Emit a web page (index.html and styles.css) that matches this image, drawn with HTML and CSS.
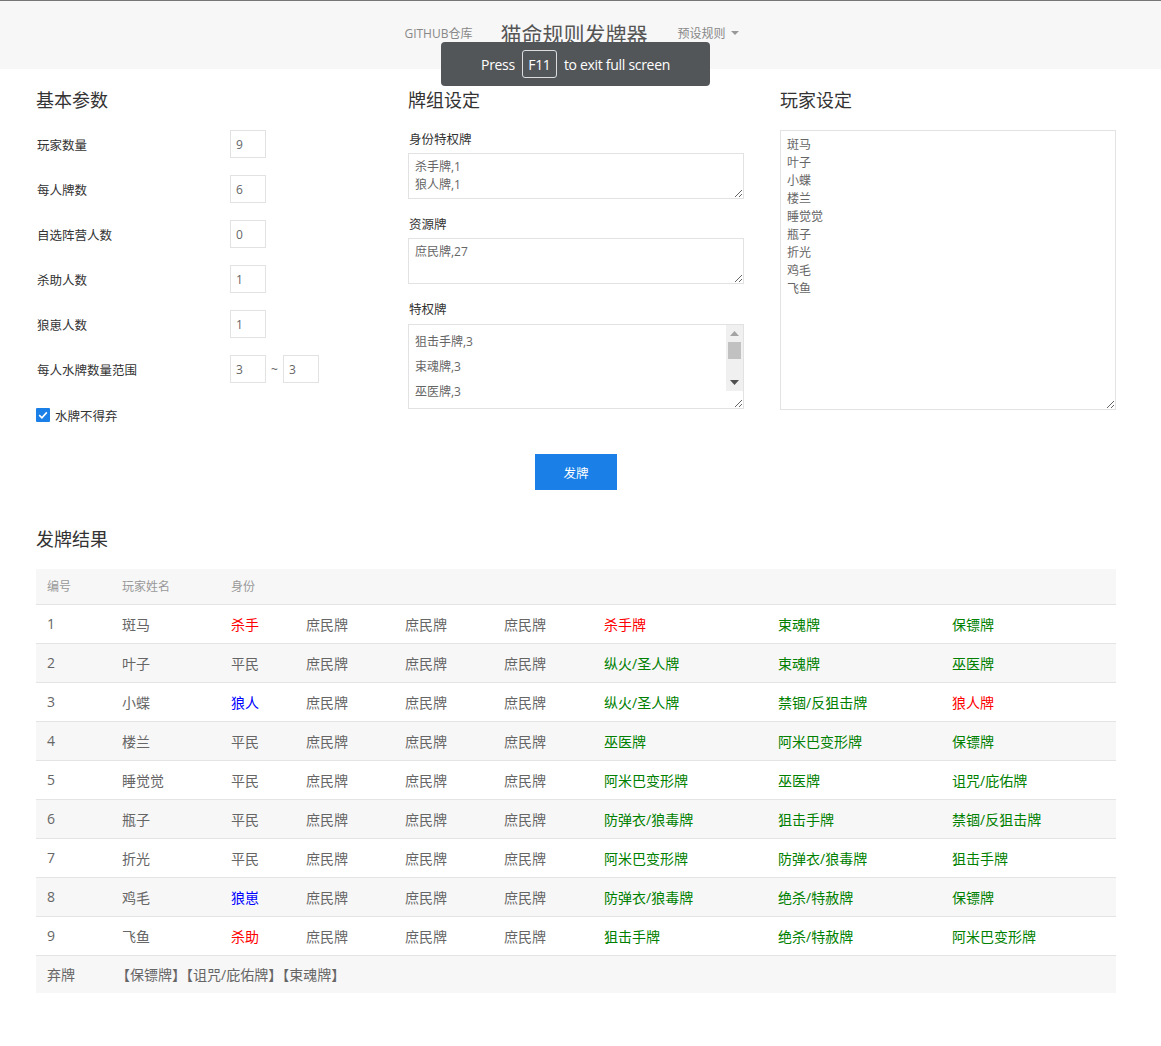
FILE: index.html
```html
<!DOCTYPE html>
<html lang="zh-CN">
<head>
<meta charset="utf-8">
<title>猫命规则发牌器</title>
<link rel="stylesheet" href="styles.css">
</head>
<body>
<header class="topbar">
  <nav class="nav">
    <a class="nav-link">GITHUB仓库</a>
    <span class="brand">猫命规则发牌器</span>
    <a class="nav-link dropdown">预设规则 <span class="caret"></span></a>
  </nav>
</header>

<div class="fs-toast">Press <span class="kbd">F11</span> to exit full screen</div>

<main class="container">
  <section class="settings">
    <div class="col">
      <h2 class="col-title">基本参数</h2>
      <div class="form-row"><label>玩家数量</label><input class="num" value="9"></div>
      <div class="form-row"><label>每人牌数</label><input class="num" value="6"></div>
      <div class="form-row"><label>自选阵营人数</label><input class="num" value="0"></div>
      <div class="form-row"><label>杀助人数</label><input class="num" value="1"></div>
      <div class="form-row"><label>狼崽人数</label><input class="num" value="1"></div>
      <div class="form-row"><label>每人水牌数量范围</label><span class="range"><input class="num" value="3"><span class="tilde">~</span><input class="num" value="3"></span></div>
      <div class="check-row"><span class="checkbox"><svg viewBox="0 0 14 14" width="14" height="14"><path d="M3.2 7.2 L5.9 9.8 L10.8 4.4" fill="none" stroke="#fff" stroke-width="1.6"/></svg></span><span>水牌不得弃</span></div>
    </div>
    <div class="col">
      <h2 class="col-title">牌组设定</h2>
      <div class="field-label first">身份特权牌</div>
      <textarea class="ta ta-s">杀手牌,1
狼人牌,1</textarea>
      <div class="field-label">资源牌</div>
      <textarea class="ta ta-s">庶民牌,27</textarea>
      <div class="field-label">特权牌</div>
      <div class="ta-wrap">
        <textarea class="ta ta-m">狙击手牌,3
束魂牌,3
巫医牌,3
保镖牌,3
纵火/圣人牌,2
阿米巴变形牌,3
防弹衣/狼毒牌,3
绝杀/特赦牌,2
禁锢/反狙击牌,2
诅咒/庇佑牌,1
狼人牌,1
杀手牌,1</textarea>
        <div class="fake-scroll" aria-hidden="true">
          <span class="sb-btn sb-up"><svg width="9" height="5" viewBox="0 0 9 5"><path d="M0 5 L4.5 0 L9 5 Z" fill="#a3a3a3"/></svg></span>
          <span class="sb-track"><span class="sb-thumb"></span></span>
          <span class="sb-btn sb-down"><svg width="9" height="5" viewBox="0 0 9 5"><path d="M0 0 L4.5 5 L9 0 Z" fill="#505050"/></svg></span>
        </div>
      </div>
    </div>
    <div class="col">
      <h2 class="col-title">玩家设定</h2>
      <textarea class="ta ta-l">斑马
叶子
小蝶
楼兰
睡觉觉
瓶子
折光
鸡毛
飞鱼</textarea>
    </div>
  </section>

  <div class="actions"><button class="btn">发牌</button></div>

  <h2 class="col-title result-title">发牌结果</h2>
  <table class="result">
    <colgroup>
      <col class="c-no"><col class="c-name"><col class="c-role"><col class="c-res"><col class="c-res"><col class="c-res2"><col class="c-card"><col class="c-card"><col>
    </colgroup>
    <thead>
      <tr><th>编号</th><th>玩家姓名</th><th>身份</th><th></th><th></th><th></th><th></th><th></th><th></th></tr>
    </thead>
    <tbody>
      <tr><td>1</td><td>斑马</td><td class="red">杀手</td><td>庶民牌</td><td>庶民牌</td><td>庶民牌</td><td class="red">杀手牌</td><td class="green">束魂牌</td><td class="green">保镖牌</td></tr>
      <tr><td>2</td><td>叶子</td><td>平民</td><td>庶民牌</td><td>庶民牌</td><td>庶民牌</td><td class="green">纵火/圣人牌</td><td class="green">束魂牌</td><td class="green">巫医牌</td></tr>
      <tr><td>3</td><td>小蝶</td><td class="blue">狼人</td><td>庶民牌</td><td>庶民牌</td><td>庶民牌</td><td class="green">纵火/圣人牌</td><td class="green">禁锢/反狙击牌</td><td class="red">狼人牌</td></tr>
      <tr><td>4</td><td>楼兰</td><td>平民</td><td>庶民牌</td><td>庶民牌</td><td>庶民牌</td><td class="green">巫医牌</td><td class="green">阿米巴变形牌</td><td class="green">保镖牌</td></tr>
      <tr><td>5</td><td>睡觉觉</td><td>平民</td><td>庶民牌</td><td>庶民牌</td><td>庶民牌</td><td class="green">阿米巴变形牌</td><td class="green">巫医牌</td><td class="green">诅咒/庇佑牌</td></tr>
      <tr><td>6</td><td>瓶子</td><td>平民</td><td>庶民牌</td><td>庶民牌</td><td>庶民牌</td><td class="green">防弹衣/狼毒牌</td><td class="green">狙击手牌</td><td class="green">禁锢/反狙击牌</td></tr>
      <tr><td>7</td><td>折光</td><td>平民</td><td>庶民牌</td><td>庶民牌</td><td>庶民牌</td><td class="green">阿米巴变形牌</td><td class="green">防弹衣/狼毒牌</td><td class="green">狙击手牌</td></tr>
      <tr><td>8</td><td>鸡毛</td><td class="blue">狼崽</td><td>庶民牌</td><td>庶民牌</td><td>庶民牌</td><td class="green">防弹衣/狼毒牌</td><td class="green">绝杀/特赦牌</td><td class="green">保镖牌</td></tr>
      <tr><td>9</td><td>飞鱼</td><td class="red">杀助</td><td>庶民牌</td><td>庶民牌</td><td>庶民牌</td><td class="green">狙击手牌</td><td class="green">绝杀/特赦牌</td><td class="green">阿米巴变形牌</td></tr>
      <tr class="discard"><td>弃牌</td><td colspan="8" class="discard-list">【保镖牌】【诅咒/庇佑牌】【束魂牌】</td></tr>
    </tbody>
  </table>
</main>
</body>
</html>
```

FILE: styles.css
```css
* { box-sizing: border-box; }
html, body { margin: 0; padding: 0; }
body {
  font-family: "Open Sans", "Noto Sans CJK SC", sans-serif;
  color: #333;
  background: #fff;
  font-size: 12px;
}

.topbar {
  height: 69px;
  background: #f7f7f7;
  border-top: 1px solid #777;
}
.nav {
  display: flex;
  justify-content: center;
  align-items: center;
  height: 64px;
  gap: 28px;
  padding-right: 18px;
}
.nav-link {
  font-size: 12px;
  color: #888;
  text-transform: uppercase;
}
.dropdown { margin-left: 2px; }
.brand {
  font-size: 21px;
  color: #555;
}
.caret {
  display: inline-block;
  width: 0; height: 0;
  border-left: 4px solid transparent;
  border-right: 4px solid transparent;
  border-top: 4px solid #999;
  vertical-align: middle;
  margin-left: 2px;
  margin-top: -3px;
}

.fs-toast {
  position: absolute;
  left: 441px;
  top: 42px;
  width: 269px;
  height: 44px;
  background: #535659;
  border-radius: 4px;
  color: #fff;
  font-family: "Open Sans", sans-serif;
  font-size: 14px;
  letter-spacing: -0.3px;
  display: flex;
  align-items: center;
  justify-content: center;
  gap: 7px;
}
.kbd {
  display: inline-flex;
  align-items: center;
  justify-content: center;
  width: 35px;
  height: 28px;
  border: 1px solid #ddd;
  border-radius: 3px;
}

.container {
  width: 1080px;
  margin: 0 36px;
  padding-top: 18px;
}
.settings {
  display: grid;
  grid-template-columns: 336px 336px 336px;
  column-gap: 36px;
}
.col { display: flex; flex-direction: column; }
.col-title {
  font-size: 18px;
  font-weight: normal;
  color: #333;
  line-height: 26px;
  height: 26px;
  margin: 0 0 17px 0;
}

.form-row {
  display: flex;
  align-items: center;
  height: 28px;
  margin-bottom: 17px;
}
.form-row label {
  width: 194px;
  font-size: 12.5px;
  color: #333;
  padding-left: 1px;
}
.num {
  width: 36px;
  height: 28px;
  border: 1px solid #e2e2e2;
  padding: 0 0 0 5px;
  font-family: "Open Sans", sans-serif;
  font-size: 12px;
  color: #666;
  outline: none;
}
.range { display: flex; align-items: center; }
.tilde { width: 17px; text-align: center; color: #666; font-size: 12px; }
.check-row {
  display: flex;
  align-items: center;
  height: 30px;
  gap: 5px;
  font-size: 12.5px;
}
.checkbox {
  width: 14px;
  height: 14px;
  background: #1a7fe6;
  border-radius: 1px;
  display: inline-flex;
}
.checkbox svg { display: block; }

.field-label {
  font-size: 12.5px;
  line-height: 18px;
  height: 18px;
  color: #333;
  margin-bottom: 4px;
  padding-left: 1px;
}
.field-label.first { margin-top: 1px; }
.ta {
  display: block;
  width: 336px;
  border: 1px solid #e2e2e2;
  font-family: "Open Sans", "Noto Sans CJK SC", sans-serif;
  font-size: 12px;
  color: #666;
  padding: 3px 6px;
  line-height: 18px;
  resize: vertical;
  outline: none;
  margin: 0;
}
.ta-s { height: 46px; margin-bottom: 17px; padding-top: 4px; }
.ta-wrap { position: relative; width: 336px; margin-top: 1px; }
.ta-m {
  height: 85px;
  line-height: 25px;
  padding-top: 4px;
  padding-right: 24px;
}
.fake-scroll {
  position: absolute;
  top: 1px;
  right: 1px;
  width: 17px;
  height: 66px;
  background: #f0f0f0;
  display: flex;
  flex-direction: column;
}
.sb-btn {
  height: 17px;
  display: flex;
  align-items: center;
  justify-content: center;
}
.sb-btn svg { display: block; }
.sb-track { flex: 1; position: relative; }
.sb-thumb {
  position: absolute;
  top: 0;
  left: 2px;
  width: 13px;
  height: 17px;
  background: #c1c1c1;
}
.ta-l { height: 280px; padding-top: 5px; }

.actions {
  display: flex;
  justify-content: center;
  margin-top: 24px;
}
.btn {
  width: 82px;
  height: 36px;
  background: #1a7fe6;
  color: #fff;
  border: none;
  border-radius: 0;
  font-family: "Noto Sans CJK SC", sans-serif;
  font-size: 12.5px;
}

.result-title { margin-top: 36px; margin-bottom: 17px; }

.result {
  width: 1080px;
  border-collapse: collapse;
  table-layout: fixed;
  font-size: 14px;
}
.c-no { width: 75px; }
.c-name { width: 109px; }
.c-role { width: 75px; }
.c-res { width: 99px; }
.c-res2 { width: 100px; }
.c-card { width: 174px; }
.result thead tr { background: #f7f7f7; }
.result th {
  height: 35px;
  text-align: left;
  font-weight: normal;
  font-size: 12px;
  color: #999;
  padding: 0 0 0 11px;
  border-bottom: 1px solid #e4e4e4;
}
.result td {
  height: 39px;
  padding: 0 0 0 11px;
  color: #666;
  border-bottom: 1px solid #e4e4e4;
  white-space: nowrap;
}
.result tbody tr:nth-child(even) { background: #f7f7f7; }
.result tr.discard { background: #f7f7f7; }
.result tr.discard td { border-bottom: none; height: 38px; }
.discard-list { padding-left: 5px !important; }
.red { color: #f00 !important; }
.blue { color: #00f !important; }
.green { color: #008000 !important; }
```
